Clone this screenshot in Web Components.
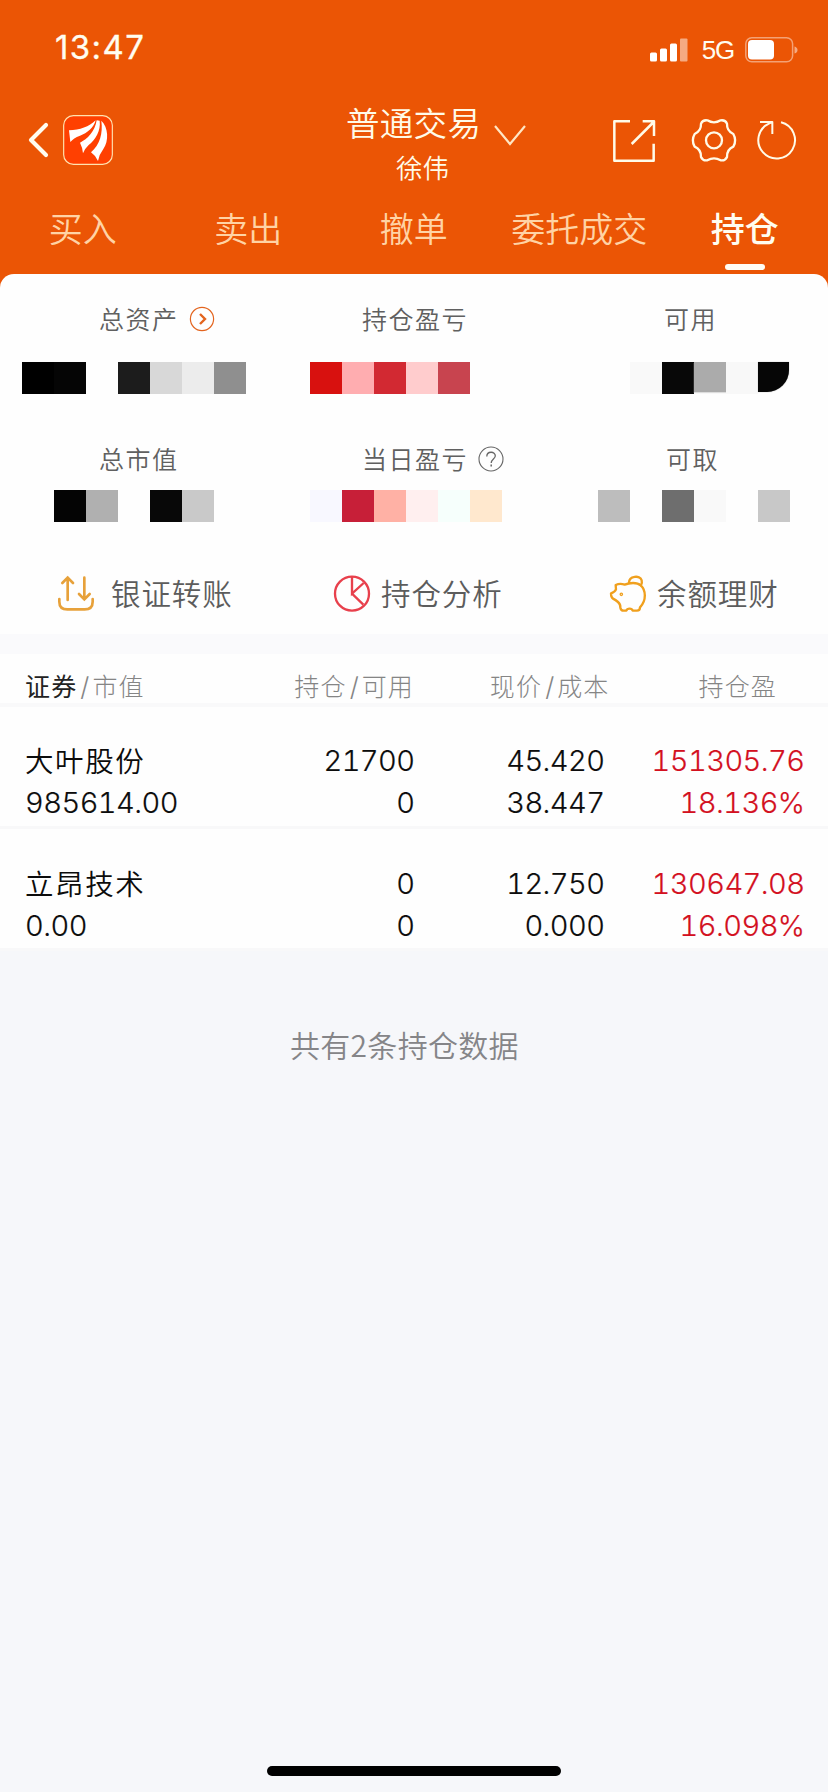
<!DOCTYPE html>
<html lang="zh-CN">
<head>
<meta charset="utf-8">
<title>持仓</title>
<style>
html,body{margin:0;padding:0}
body{width:828px;height:1792px;overflow:hidden;background:#f6f7fa;font-family:"Inter","Noto Sans CJK SC",sans-serif;font-weight:300}
</style>
</head>
<body>
<trade-app></trade-app>
<script>
const CJK = '"Noto Sans CJK SC",sans-serif';
function define(name, html) {
  const t = document.createElement('template');
  t.innerHTML = html;
  customElements.define(name, class extends HTMLElement {
    constructor() {
      super();
      this.attachShadow({ mode: 'open' }).appendChild(t.content.cloneNode(true));
    }
  });
}

define('status-bar', `
<style>
:host{display:flex;height:96px;box-sizing:border-box;padding:0 29px 0 55px;align-items:flex-start;justify-content:space-between;color:#fffdf0}
.time{font:400 33px/40px "Inter",sans-serif;letter-spacing:1.400px;margin-top:26.500px;-webkit-text-stroke:.3px #fffdf0}
.right{display:flex;margin-top:34px;height:32px;align-items:center}
.net{font:400 26px/32px "Liberation Sans",sans-serif;margin:0 11px 0 14px;letter-spacing:-1.2px}
svg{display:block}
</style>
<span class="time">13:47</span>
<div class="right">
<svg width="38" height="26" viewBox="0 0 38 26"><g fill="#fff"><rect x="0" y="15.500" width="7" height="9" rx="1.500"/><rect x="10" y="11.500" width="7" height="13" rx="1.500"/><rect x="20" y="6.500" width="7" height="18" rx="1.500"/><rect x="30" y="1.500" width="7.500" height="23" rx="1" opacity=".5"/></g></svg>
<span class="net">5G</span>
<svg width="54" height="26" viewBox="0 0 54 26"><rect x=".8" y=".8" width="46.800" height="24" rx="6" fill="none" stroke="#fff" stroke-opacity=".45" stroke-width="1.500"/><rect x="3" y="3" width="26" height="19.500" rx="4" fill="#fff"/><path d="M49.500 9.500q3 1 3 3.500t-3 3.500z" fill="#fff" opacity=".5"/></svg>
</div>`);

define('nav-bar', `
<style>
:host{display:flex;height:96px;box-sizing:border-box;padding-bottom:8px;position:relative;align-items:center}
svg{display:block;flex:none}
.back{margin-left:25px}
.logo{margin-left:12px}
.title{position:absolute;left:340px;top:5px;width:206px;color:#fffbe8}
.row{display:flex;align-items:center}
.main{font:350 33.500px/44px ${CJK};margin:-1px 0 1px 6px;white-space:nowrap;width:140px;letter-spacing:.3px}
.sub{font:350 26.500px/36px ${CJK};margin:4px 0 0 56px}
.down{margin:21px 0 -4px 7px}
.tools{display:flex;margin-left:auto;padding-right:30px;align-items:center}
</style>
<svg class="back" width="26" height="40" viewBox="0 0 26 40"><path d="M21 5L6 20 21 35" fill="none" stroke="#fffdf0" stroke-width="4.200" stroke-linecap="round" stroke-linejoin="round"/></svg>
<svg class="logo" width="50" height="50" viewBox="189 344 150 150"><rect x="191" y="346" width="146" height="146" rx="29" fill="#ff4001" stroke="#ffe3b0" stroke-width="3.500"/><g fill="#fff"><path d="M207 390C240 390 267 379 287 360C281 383 262 398 240 406C226 411 218 417 211 425Z"/><path d="M240 427C262 416 285 394 290 360L299 361C303 391 286 418 266 434Q254 445 249 459Q247 440 240 427Z"/><path d="M304 361C325 380 327 422 310 446Q297 463 294 482Q286 465 273 456C300 432 309 400 304 361Z"/></g></svg>
<div class="title">
<div class="row"><span class="main">普通交易</span><svg class="down" width="34" height="26" viewBox="234 370 102 78"><path d="M240 379L285 433 330 379" fill="none" stroke="#ffe6c4" stroke-width="6.500"/></svg></div>
<div class="sub">徐伟</div>
</div>
<div class="tools">
<svg width="186" height="48" viewBox="591 348 558 144" fill="none" stroke="#fffbe8" stroke-width="6.500" stroke-linejoin="round">
<path d="M645 364H598V482H716V431M650 432L716 366M683 364H717V408" stroke-width="7.500"/>
<path d="M877 361Q897 373 917 361Q931 359 936 371Q935 393 955 402Q966 421 955 440Q935 449 936 471Q931 483 917 481Q897 469 877 481Q863 483 858 471Q859 449 839 440Q828 421 839 402Q859 393 858 371Q863 359 877 361Z" stroke-width="7"/><circle cx="897" cy="421" r="24" stroke-width="7"/>
<path d="M1098 367A55 55 0 1 1 1063 370L1072 366M1035 366H1072V402" stroke-width="6"/>
</svg>
</div>`);

define('trade-tab', `
<style>
:host{display:flex;flex-direction:column;align-items:center;height:82px;color:#ffd3a5;font:350 34px/44px ${CJK};white-space:nowrap}
i{width:40px;height:6px;border-radius:3px;margin-top:14px;background:transparent}
span{height:44px}
:host([active]){color:#fffdf0;font-weight:500}
:host([active]) i{background:#fffdf5}
</style><span><slot></slot></span><i></i>`);

define('trade-tabs', `
<style>:host{display:grid;grid-template-columns:repeat(5,165.500px);height:82px}</style>
<trade-tab>买入</trade-tab><trade-tab>卖出</trade-tab><trade-tab>撤单</trade-tab><trade-tab>委托成交</trade-tab><trade-tab active>持仓</trade-tab>`);

customElements.define('mosaic-strip', class extends HTMLElement {
  connectedCallback() {
    const root = this.attachShadow({ mode: 'open' });
    root.innerHTML = `<style>:host{display:flex;height:32px}b{width:32px;height:32px;flex:none}
b.cut{height:30px;border-bottom-right-radius:22px;width:31px;box-shadow:0 0 1px #777}b.trim{height:30px;box-shadow:0 1px 1px #ddd}</style>`
      + this.getAttribute('cells').split(' ').map(c => {
        const [col, cls] = c.split(':');
        return `<b class="${cls || ''}" style="background:${col === '-' ? 'transparent' : '#' + col}"></b>`;
      }).join('');
  }
});

define('stat-item', `
<style>
:host{display:block;height:140px;box-sizing:border-box}
.label{display:flex;height:38px;align-items:center;gap:12px;margin-left:var(--lx);font:350 25px/38px ${CJK};letter-spacing:1.500px;color:#606060;white-space:nowrap}
.value{margin:var(--gap,25px) 0 0 var(--mx)}
</style>
<div class="label"><slot></slot><slot name="icon"></slot></div>
<div class="value"><slot name="value"></slot></div>`);

define('quick-action', `
<style>
:host{display:flex;align-items:center;height:44px;color:#5c5c5c;font:350 29.500px/44px ${CJK};letter-spacing:.9px;white-space:nowrap}
</style><slot name="icon"></slot><slot></slot>`);

define('account-panel', `
<style>
:host{display:block;height:360px;box-sizing:border-box;padding-top:25px;background:#fefefe;border-radius:14px 14px 0 0}
.stats{display:grid;grid-template-columns:276px 276px 276px;grid-template-rows:140px 131px}
.low{--gap:13px}
svg{display:block;flex:none}
.actions{display:flex}
quick-action svg{width:40px;height:40px;margin-top:3px}
</style>
<div class="stats">
<stat-item style="--lx:99px;--mx:22px">总资产<svg slot="icon" style="margin:1px 0 0 -2px" width="26" height="26" viewBox="0 0 26 26" fill="none" stroke="#e3641e"><circle cx="13" cy="13" r="11.600" stroke-width="1.200"/><path d="M11 8l5 5-5 5" stroke-width="2.400"/></svg><mosaic-strip slot="value" cells="000 050505 - 1c1c1c d8d8d8 ececec 8f8f8f"></mosaic-strip></stat-item>
<stat-item style="--lx:86px;--mx:34px">持仓盈亏<mosaic-strip slot="value" cells="d8110f ffadb0 d22932 ffcccd c8444f"></mosaic-strip></stat-item>
<stat-item style="--lx:112px;--mx:78px">可用<mosaic-strip slot="value" cells="f9f9f9 080808 ababab:trim f8f8f8 060606:cut"></mosaic-strip></stat-item>
<stat-item class="low" style="--lx:99px;--mx:54px">总市值<mosaic-strip slot="value" cells="040404 b0b0b0 - 080808 c9c9c9"></mosaic-strip></stat-item>
<stat-item class="low" style="--lx:86px;--mx:34px">当日盈亏<svg slot="icon" style="margin:1px 0 0 -2px" width="26" height="26" viewBox="0 0 26 26" fill="none" stroke="#666"><circle cx="13" cy="13" r="12" stroke-width="1.100"/><path d="M8.800 10.500C8.800 4.800 17.500 5 17.300 10 17.100 12.800 13.200 13.300 13.200 17" stroke-width="1.300"/><path d="M13.200 18.600v1.800" stroke-width="1.500"/></svg><mosaic-strip slot="value" cells="f8f8ff c71f38 ffb1a5 ffefef f6fffc ffe8ce"></mosaic-strip></stat-item>
<stat-item class="low" style="--lx:114px;--mx:46px">可取<mosaic-strip slot="value" cells="bdbdbd - 6e6e6e f9f9f9 - c8c8c8"></mosaic-strip></stat-item>
</div>
<div class="actions">
<quick-action style="width:276px;box-sizing:border-box;padding-left:56px"><svg slot="icon" style="margin-right:15px" viewBox="168 132 120 120" fill="none" stroke="#e7a13a" stroke-width="8" stroke-linecap="round"><path d="M203 210V143M187 159L203 143 219 159M253 143V207M237 192L253 208 269 192M178 207V215Q178 238 202 238H254Q278 238 278 215V207"/></svg>银证转账</quick-action>
<quick-action style="width:276px;box-sizing:border-box;padding-left:56px"><svg slot="icon" style="margin-right:9px" viewBox="996 132 120 120" fill="none" stroke="#e8404c" stroke-width="7"><circle cx="1056" cy="191" r="51"/><path d="M1056 140V191L1091 159M1056 191L1090 224"/></svg>持仓分析</quick-action>
<quick-action style="width:276px;box-sizing:border-box;padding-left:56px"><svg slot="icon" style="margin-right:9px" viewBox="581 132 120 120" fill="none" stroke="#f0a01e" stroke-width="7" stroke-linejoin="round" stroke-linecap="round"><path d="M604 165L605 178Q603 186 590 190Q590 203 596 206Q604 210 611 216Q619 223 618 233Q620 242 628 242H636Q638 236 646 236Q653 236 655 242H668Q677 242 677 232C697 212 695 180 679 166C668 156 645 158 631 164Q617 159 604 165Z"/><path d="M644 158C644 138 677 134 682 151Q684 158 680 166"/><circle cx="621" cy="193" r="2"/></svg>余额理财</quick-action>
</div>`);

define('table-head', `
<style>
:host{display:grid;grid-template-columns:25px 235px 154px 195.500px 1fr;height:53px;box-sizing:border-box;border-bottom:4px solid #f9f9fa;background:#fefefe;padding-top:14px;font:300 25px/35px ${CJK};letter-spacing:1.150px;color:#858585;white-space:nowrap}
b{font-weight:400;color:#222}
s{text-decoration:none;font:300 26px/35px "Inter",sans-serif;letter-spacing:0;margin:0 3px 0 3px}
.r{text-align:right}
.last{padding-left:89px}
</style>
<span></span><span><b>证券</b><s>/</s>市值</span><span class="r">持仓<s>/</s>可用</span><span class="r">现价<s>/</s>成本</span><span class="last">持仓盈</span>`);

define('position-row', `
<style>
:host{display:grid;grid-template-columns:25px 235px 154.500px 190px 200px;grid-template-rows:42px 42px;box-sizing:border-box;height:122px;padding-top:33px;border-bottom:3px solid #f8f8f9;background:#fefefe;color:#0c0c0c;font:300 29px/42px "Inter",sans-serif;font-feature-settings:"tnum";letter-spacing:-.55px;-webkit-text-stroke:.2px currentColor}
::slotted(*){text-align:right;white-space:nowrap}
::slotted(.name){text-align:left;grid-column:2;font:350 28.500px/40px ${CJK};letter-spacing:1.600px;-webkit-text-stroke:0}
::slotted(.worth){text-align:left;grid-column:2}
::slotted(.gain){color:#d3101f;-webkit-text-stroke:.2px #d3101f}
</style><slot></slot>`);

define('trade-app', `
<style>
:host{display:flex;flex-direction:column;width:828px;height:1792px}
header{background:#eb5505;height:274px}
.panel{background:#eb5505;height:360px}
.gap{height:20px;background:#fafafc}
.count{margin-top:72px;padding-left:290px;font:350 30px/42px ${CJK};color:#858588;letter-spacing:.3px}
.home{width:294px;height:9.500px;border-radius:5px;background:#000;margin:auto auto 16.500px 267px}
</style>
<header><status-bar></status-bar><nav-bar></nav-bar><trade-tabs style="margin-top:14px"></trade-tabs></header>
<div class="panel"><account-panel></account-panel></div>
<div class="gap"></div>
<table-head></table-head>
<position-row><span class="name">大叶股份</span><span>21700</span><span>45.420</span><span class="gain">151305.76</span><span class="worth">985614.00</span><span>0</span><span>38.447</span><span class="gain">18.136%</span></position-row>
<position-row style="padding-top:34px"><span class="name">立昂技术</span><span>0</span><span>12.750</span><span class="gain">130647.08</span><span class="worth">0.00</span><span>0</span><span>0.000</span><span class="gain">16.098%</span></position-row>
<div class="count">共有2条持仓数据</div>
<div class="home"></div>`);
</script>
</body>
</html>
